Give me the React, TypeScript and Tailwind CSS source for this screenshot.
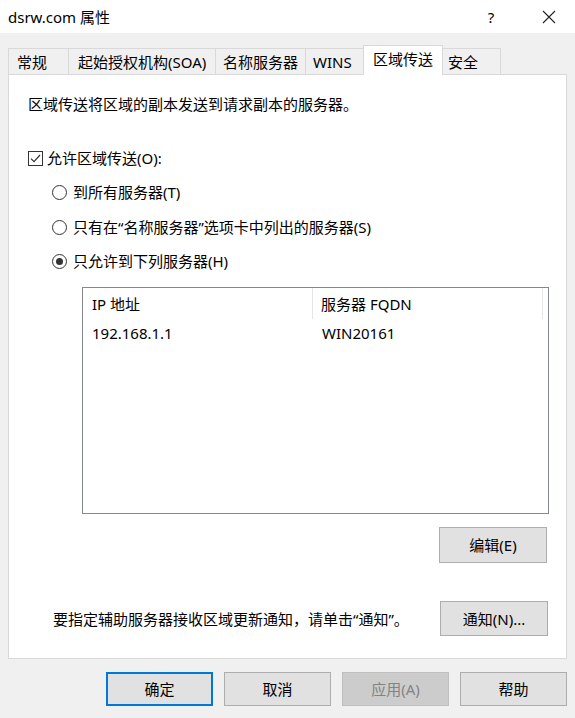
import React from "react";

type TabProps = { label: string; w: string; pl: string; active?: boolean; first?: boolean };

function Tab({ label, w, pl, active, first }: TabProps) {
  if (active) {
    return (
      <div
        className={`relative z-10 -ml-px -mb-px h-[30px] bg-white border border-b-0 border-[#d9d9d9] pt-[3px] leading-[20px] whitespace-nowrap ${w} ${pl}`}
      >
        {label}
      </div>
    );
  }
  return (
    <div
      className={`h-[26px] flex items-center bg-[#f0f0f0] border border-b-0 border-[#d9d9d9] leading-[20px] whitespace-nowrap ${first ? "" : "-ml-px"} ${w} ${pl}`}
    >
      {label}
    </div>
  );
}

function Radio({ checked, label }: { checked?: boolean; label: string }) {
  return (
    <div className="flex items-center h-[20px] pl-[43px]">
      <span className="w-[15px] h-[15px] rounded-full border border-[#333333] bg-white flex items-center justify-center">
        {checked && <span className="w-[7px] h-[7px] rounded-full bg-[#333333]" />}
      </span>
      <span className="ml-[6px] leading-[20px] whitespace-nowrap">{label}</span>
    </div>
  );
}

function Button({ label, kind, w = "w-[107px]", h = "h-[34px]" }: { label: string; kind?: "default" | "disabled"; w?: string; h?: string }) {
  const look =
    kind === "default"
      ? "border-2 border-[#0078d7] bg-[#e1e1e1] text-black"
      : kind === "disabled"
      ? "border border-[#bfbfbf] bg-[#cccccc] text-[#838383]"
      : "border border-[#adadad] bg-[#e1e1e1] text-black";
  return (
    <div className={`${w} ${h} flex items-center justify-center leading-[20px] whitespace-nowrap ${look}`}>
      {label}
    </div>
  );
}

export default function App() {
  return (
    <div className="w-[575px] h-[718px] bg-[#f0f0f0] text-black text-[15px] font-['Noto_Sans','Noto_Sans_CJK_SC',sans-serif] overflow-hidden">
      {/* Title bar */}
      <div className="h-[33px] bg-white flex items-center pl-[8px]">
        <span className="leading-[20px] whitespace-nowrap">dsrw.com 属性</span>
        <span className="ml-auto w-[10px] text-center leading-[20px]">?</span>
        <span className="ml-[46px] mr-[19px] flex items-center">
          <svg width="14" height="14" viewBox="0 0 14 14">
            <path d="M1 1 L13 13 M13 1 L1 13" stroke="#222" strokeWidth="1.1" fill="none" />
          </svg>
        </span>
      </div>

      {/* Tabs */}
      <div className="flex items-end pl-[8px] pt-[12px]">
        <Tab label="常规" w="w-[61px]" pl="pl-[8px]" first />
        <Tab label="起始授权机构(SOA)" w="w-[148px]" pl="pl-[9px]" />
        <Tab label="名称服务器" w="w-[91px]" pl="pl-[7px]" />
        <Tab label="WINS" w="w-[59px]" pl="pl-[7px]" />
        <Tab label="区域传送" w="w-[80px]" pl="pl-[9px]" active />
        <Tab label="安全" w="w-[59px]" pl="pl-[5px]" />
      </div>

      {/* Panel */}
      <div className="ml-[8px] w-[559px] h-[585px] bg-white border border-[#d9d9d9] flex flex-col">
        <div className="mt-[19px] pl-[19px] leading-[20px] whitespace-nowrap">
          区域传送将区域的副本发送到请求副本的服务器。
        </div>

        <div className="mt-[34px] pl-[19px] flex items-center h-[20px]">
          <span className="w-[15px] h-[15px] border border-[#333333] bg-white flex items-center justify-center">
            <svg width="13" height="13" viewBox="0 0 13 13">
              <path d="M2 6.6 L5 9.6 L11 3" stroke="#333" strokeWidth="1.2" fill="none" />
            </svg>
          </span>
          <span className="ml-[4px] leading-[20px] whitespace-nowrap">允许区域传送(O):</span>
        </div>

        <div className="mt-[14px]">
          <Radio label="到所有服务器(T)" />
        </div>
        <div className="mt-[15px]">
          <Radio label="只有在“名称服务器”选项卡中列出的服务器(S)" />
        </div>
        <div className="mt-[14px]">
          <Radio label="只允许到下列服务器(H)" checked />
        </div>

        {/* Server list */}
        <div className="mt-[16px] ml-[73px] w-[467px] h-[227px] border border-[#828790] bg-white flex flex-col">
          <div className="flex h-[31px]">
            <div className="w-[230px] flex items-center pl-[9px] border-r border-[#e5e5e5] leading-[20px]">IP 地址</div>
            <div className="w-[230px] flex items-center pl-[8px] border-r border-[#e5e5e5] leading-[20px] whitespace-nowrap">服务器 FQDN</div>
          </div>
          <div className="flex h-[28px] items-center">
            <div className="w-[231px] pl-[9px] leading-[20px]">192.168.1.1</div>
            <div className="pl-[8px] leading-[20px]">WIN20161</div>
          </div>
        </div>

        <div className="mt-[13px] ml-[430px]">
          <Button label="编辑(E)" w="w-[108px]" h="h-[36px]" />
        </div>

        <div className="mt-[38px] flex items-center">
          <span className="ml-[44px] leading-[20px] whitespace-nowrap">要指定辅助服务器接收区域更新通知，请单击“通知”。</span>
          <span className="ml-auto mr-[18px]">
            <Button label="通知(N)..." w="w-[108px]" h="h-[35px]" />
          </span>
        </div>
      </div>

      {/* Dialog buttons */}
      <div className="mt-[13px] flex justify-end gap-[11px] pr-[8px]">
        <Button label="确定" kind="default" />
        <Button label="取消" />
        <Button label="应用(A)" kind="disabled" />
        <Button label="帮助" />
      </div>
    </div>
  );
}
